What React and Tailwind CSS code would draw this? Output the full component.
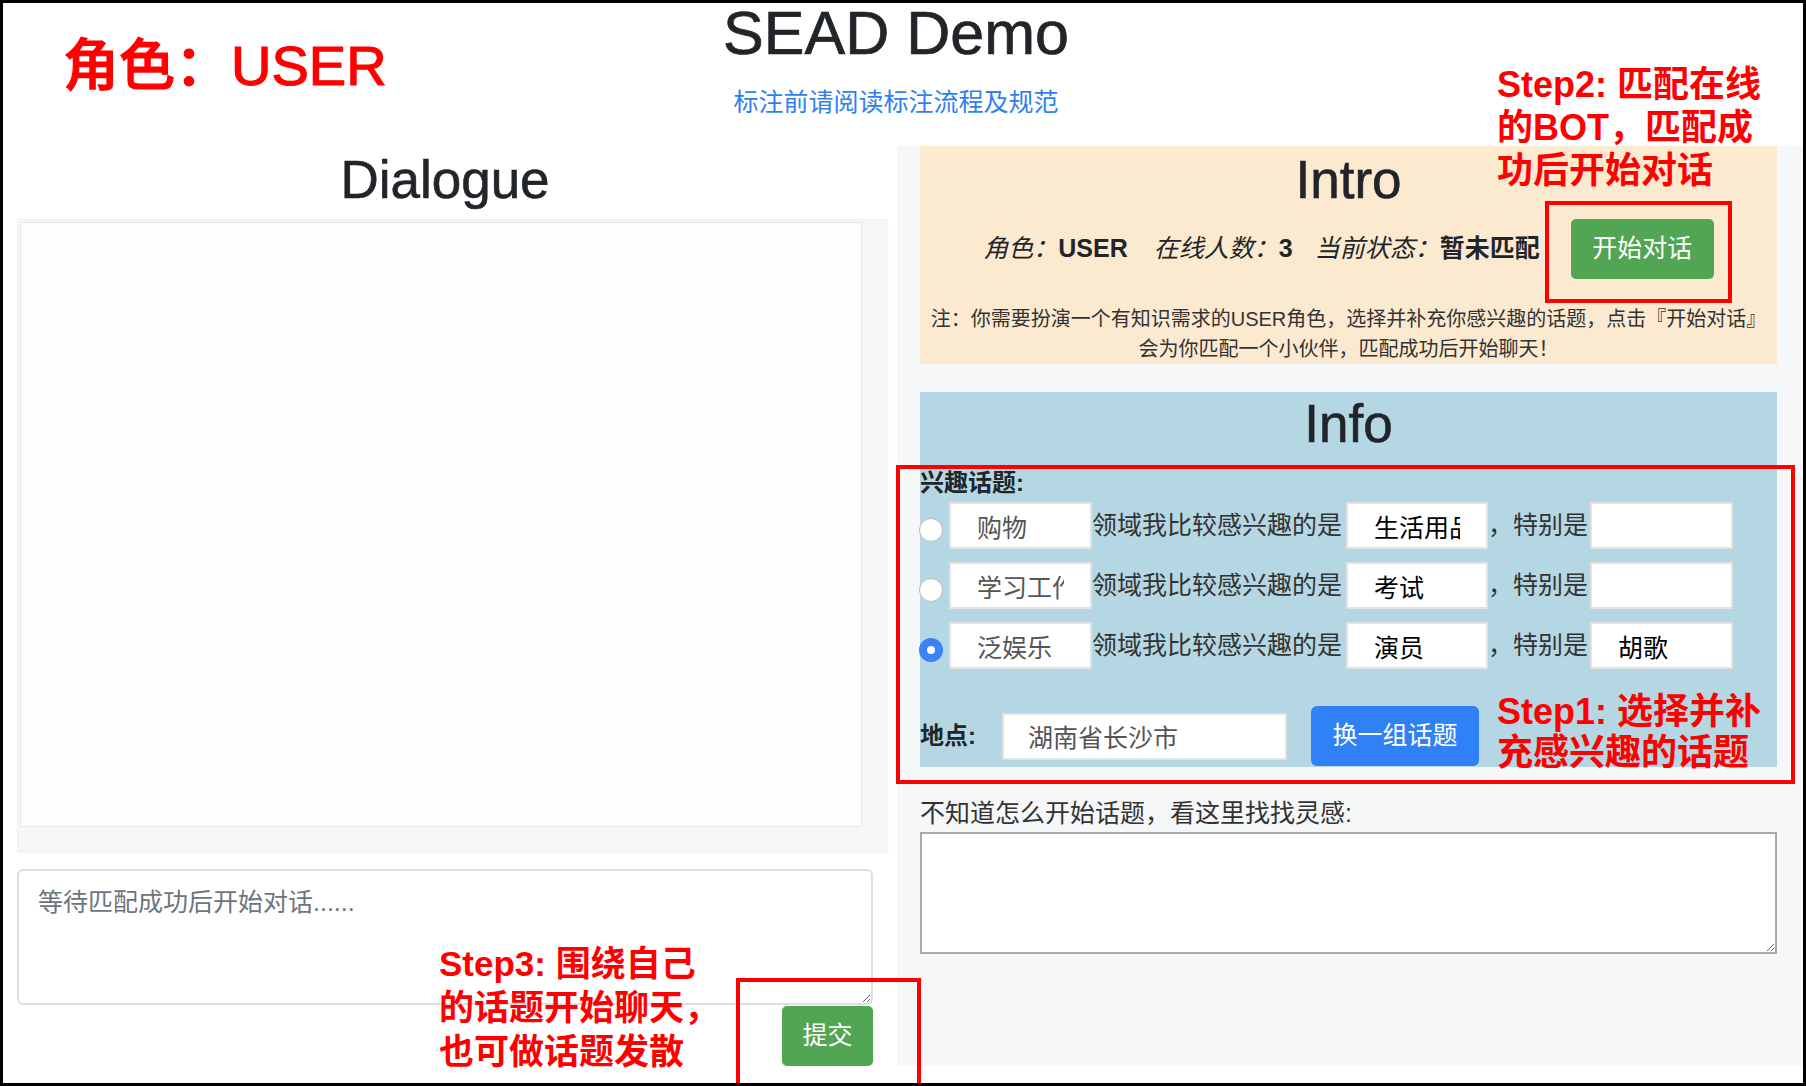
import React from "react";

const topics = [
  { name: "购物", field: "生活用品", detail: "", checked: false },
  { name: "学习工作", field: "考试", detail: "", checked: false },
  { name: "泛娱乐", field: "演员", detail: "胡歌", checked: true },
];

const Radio = ({ checked }) =>
  checked ? (
    <div className="-ml-[1px] mr-[6px] mt-[8px] flex h-[24px] w-[24px] shrink-0 items-center justify-center rounded-full bg-[#3b82f6]">
      <div className="h-[8px] w-[8px] rounded-full bg-white"></div>
    </div>
  ) : (
    <div className="-ml-[1px] mr-[6px] mt-[8px] h-[24px] w-[24px] shrink-0 rounded-full border border-[#b9b9b9] bg-white"></div>
  );

export default function App() {
  return (
    <div className="relative h-[1086px] w-[1806px] overflow-hidden border-[3px] border-black bg-white font-['Liberation_Sans','Noto_Sans_CJK_SC',sans-serif] text-[#212529]">
      {/* ========== HEADER ========== */}
      <header className="flex h-[143px] flex-col items-center pr-[14px]">
        <h1 className="text-[61px] font-medium leading-none [-webkit-text-stroke:0.7px_#212529]">SEAD Demo</h1>
        <a className="mt-[23px] text-[25px] leading-[30px] text-[#2f7fef]">标注前请阅读标注流程及规范</a>
      </header>

      <main className="flex">
        {/* ========== DIALOGUE ========== */}
        <section className="ml-[14px] w-[870px] shrink-0">
          <h2 className="w-[856px] pt-[7px] text-center text-[53px] font-medium leading-none [-webkit-text-stroke:0.6px_#212529]">Dialogue</h2>
          <div className="mt-[13px] h-[633px] w-[870px] border border-[#efefef] bg-[#f6f6f6] pb-[24px] pl-[2px] pr-[24px] pt-[2px] shadow-[1px_1px_2px_rgba(0,0,0,0.04)]">
            <div className="h-full w-full border border-[#e8e8e8] bg-[#fdfdfd]"></div>
          </div>
          <textarea
            className="mt-[17px] block h-[136px] w-[856px] rounded-[6px] border-2 border-[#dcdfe3] bg-white px-[19px] py-[13px] text-[25px] leading-[1.5] outline-none placeholder:text-[#6c757d]"
            placeholder="等待匹配成功后开始对话......"
          ></textarea>
          <div className="flex w-[856px] justify-end">
            <button className="mt-[1px] h-[60px] w-[91px] rounded-[5px] bg-[#52a552] text-[25px] text-white">提交</button>
          </div>
        </section>

        {/* ========== RIGHT PANEL ========== */}
        <section className="ml-[10px] h-[920px] flex-1 bg-[#f6f7f9] pl-[23px] pr-[26px]">
          {/* Intro */}
          <div className="h-[218px] bg-[#fbe9d0] pt-[7px]">
            <h2 className="text-center text-[53px] font-medium leading-none [-webkit-text-stroke:0.6px_#212529]">Intro</h2>
            <div className="mt-[13px] flex items-center justify-center text-[25px]">
              <span className="italic">角色：</span>
              <span className="font-bold">USER</span>
              <span className="ml-[26px] italic">在线人数：</span>
              <span className="font-bold">3</span>
              <span className="ml-[22px] italic">当前状态：</span>
              <span className="font-bold">暂未匹配</span>
              <button className="ml-[31px] h-[60px] w-[143px] rounded-[5px] bg-[#52a552] text-[25px] text-white">开始对话</button>
            </div>
            <p className="mt-[25px] text-center text-[20px] leading-[30px] text-[#333]">
              注：你需要扮演一个有知识需求的USER角色，选择并补充你感兴趣的话题，点击『开始对话』
              <br />
              会为你匹配一个小伙伴，匹配成功后开始聊天！
            </p>
          </div>

          {/* Info */}
          <div className="mt-[28px] h-[375px] bg-[#b4d7e3] pt-[5px]">
            <h2 className="text-center text-[53px] font-medium leading-none [-webkit-text-stroke:0.6px_#212529]">Info</h2>
            <div className="mt-[18px] text-[24px] font-bold leading-[30px]">兴趣话题:</div>
            <div className="mt-[4px] flex flex-col gap-[13px]">
              {topics.map((t) => (
                <div key={t.name} className="flex h-[47px] items-center text-[25px] text-[#333]">
                  <Radio checked={t.checked} />
                  <input
                    readOnly
                    value={t.name}
                    className="h-[47px] w-[143px] shrink-0 border-2 border-[#e2e2e2] bg-white px-[26px] text-[25px] text-[#555] outline-none"
                  />
                  <span className="w-[254px] shrink-0 whitespace-nowrap">领域我比较感兴趣的是</span>
                  <input
                    readOnly
                    value={t.field}
                    className="h-[47px] w-[142px] shrink-0 border-2 border-[#e2e2e2] bg-white px-[26px] text-[25px] text-black outline-none"
                  />
                  <span className="w-[102px] shrink-0 whitespace-nowrap">，特别是</span>
                  <input
                    readOnly
                    value={t.detail}
                    className="h-[47px] w-[143px] shrink-0 border-2 border-[#e2e2e2] bg-white px-[26px] text-[25px] text-black outline-none"
                  />
                </div>
              ))}
            </div>
            <div className="mt-[37px] flex h-[60px] items-center">
              <span className="w-[82px] shrink-0 text-[24px] font-bold">地点:</span>
              <input
                readOnly
                value="湖南省长沙市"
                className="h-[47px] w-[285px] border-2 border-[#e2e2e2] bg-white px-[24px] text-[25px] text-[#555] outline-none"
              />
              <button className="ml-[24px] h-[60px] w-[168px] rounded-[6px] bg-[#3080f6] text-[25px] text-white">换一组话题</button>
            </div>
          </div>

          <div className="mt-[31px] text-[25px] leading-[30px] text-[#333]">不知道怎么开始话题，看这里找找灵感:</div>
          <textarea className="mt-[4px] block h-[122px] w-full border-2 border-[#a9a9a9] bg-white outline-none"></textarea>
        </section>
      </main>

      {/* ========== ANNOTATIONS ========== */}
      <div className="absolute left-[60px] top-[35px] text-[56px] font-medium leading-none text-[#ff0000] [-webkit-text-stroke:1.2px_#ff0000]">角色：USER</div>

      <div className="absolute left-[1494px] top-[60px] text-[36px] font-semibold leading-[43px] text-[#ff0000]">
        Step2: 匹配在线
        <br />
        的BOT，匹配成
        <br />
        功后开始对话
      </div>
      <div className="absolute left-[1542px] top-[198px] h-[102px] w-[187px] border-4 border-[#ff0000]"></div>

      <div className="absolute left-[893px] top-[462px] h-[319px] w-[899px] border-4 border-[#ff0000]"></div>
      <div className="absolute left-[1494px] top-[688px] text-[36px] font-semibold leading-[41px] text-[#ff0000]">
        Step1: 选择并补
        <br />
        充感兴趣的话题
      </div>

      <div className="absolute left-[436px] top-[939px] text-[35px] font-semibold leading-[44px] text-[#ff0000]">
        Step3: 围绕自己
        <br />
        的话题开始聊天，
        <br />
        也可做话题发散
      </div>
      <div className="absolute left-[733px] top-[975px] h-[110px] w-[185px] border-4 border-[#ff0000]"></div>
    </div>
  );
}
